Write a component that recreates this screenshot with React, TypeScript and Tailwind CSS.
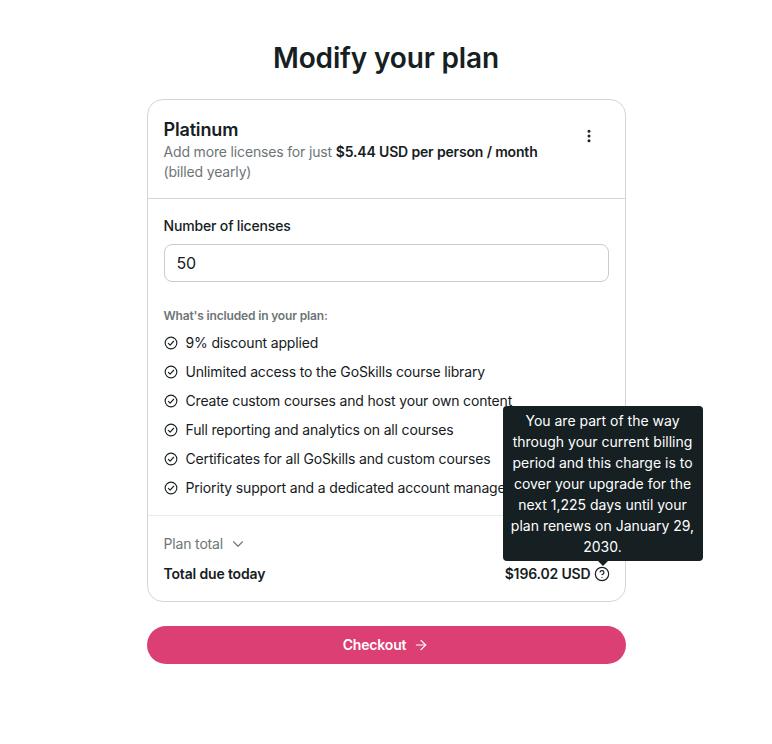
import { ArrowRight, ChevronDown, CircleHelp, EllipsisVertical } from "lucide-react";

const features = [
  "9% discount applied",
  "Unlimited access to the GoSkills course library",
  "Create custom courses and host your own content",
  "Full reporting and analytics on all courses",
  "Certificates for all GoSkills and custom courses",
  "Priority support and a dedicated account manager",
];

function CheckIcon() {
  return (
    <svg viewBox="0 0 24 24" fill="none" stroke="currentColor" strokeWidth={1.9} strokeLinecap="round" strokeLinejoin="round" className="h-[14px] w-[14px] shrink-0">
      <circle cx="12" cy="12" r="10" />
      <path d="M7.5 12.5l3 3 6-6.5" />
    </svg>
  );
}

export default function App() {
  return (
    <div className="min-h-[744px] bg-white pt-[39px] font-['Inter',sans-serif] tracking-[-0.01em] text-[#162022]">
      <h1 className="text-center text-[28px] leading-[38px] font-semibold">Modify your plan</h1>

      <div className="mx-auto mt-[22px] w-[479px]">
        <div className="rounded-[16px] border border-[#d4d6d6] bg-white">
          <div className="flex justify-between border-b border-[#d4d6d6] pt-[18px] pr-[28px] pb-[16px] pl-4">
            <div>
              <h2 className="text-[18px] leading-[24px] font-semibold">Platinum</h2>
              <p className="w-[400px] text-sm leading-[20px] text-[#6d7577]">
                Add more licenses for just{" "}
                <span className="font-semibold text-[#162022]">$5.44 USD per person / month</span> (billed yearly)
              </p>
            </div>
            <EllipsisVertical className="mt-[10px] h-[16px] w-[16px] text-[#162022]" strokeWidth={2.5} />
          </div>

          <div className="px-4 pt-[16px]">
            <label className="block text-sm leading-[21px] font-medium">Number of licenses</label>
            <div className="mt-[8px] flex h-[38px] items-center rounded-[8px] border border-[#c9cccc] px-3 text-base">50</div>

            <p className="mt-[25px] text-xs leading-[18px] font-semibold text-[#6d7577]">What's included in your plan:</p>
            <ul className="mt-[3px]">
              {features.map((f) => (
                <li key={f} className="flex h-[29px] items-center gap-2 text-sm whitespace-nowrap">
                  <CheckIcon />
                  {f}
                </li>
              ))}
            </ul>
          </div>

          <div className="relative mt-[13px] border-t border-[#e9eaea] px-4 pt-[17px] pb-[17px]">
            <div className="flex items-center gap-[6px] text-sm leading-[21px] text-[#6d7577]">
              Plan total
              <ChevronDown className="h-[18px] w-[18px]" strokeWidth={1.5} />
            </div>
            <div className="mt-[9px] flex items-center justify-between text-sm leading-[21px] font-semibold">
              <span>Total due today</span>
              <span className="-mr-px flex items-center gap-[3px]">
                $196.02 USD
                <CircleHelp className="h-[16px] w-[16px]" strokeWidth={1.75} />
              </span>
            </div>

            <div className="absolute top-[-110px] left-[355px] w-[200px] rounded-[4px] bg-[#162022] px-2 py-[4px] text-center text-sm leading-[21px] tracking-normal text-white">
              You are part of the way through your current billing period and this charge is to cover your upgrade for the next 1,225 days until your plan renews on January 29, 2030.
              <span className="absolute -bottom-[5px] left-[94px] h-0 w-0 border-x-[6px] border-t-[6px] border-x-transparent border-t-[#162022]" />
            </div>
          </div>
        </div>

        <button className="mt-[24px] flex h-[38px] w-full items-center justify-center gap-[7px] rounded-full bg-[#db3f73] text-sm font-semibold text-white">
          Checkout
          <ArrowRight className="h-[16px] w-[16px]" strokeWidth={1.75} />
        </button>
      </div>
    </div>
  );
}
